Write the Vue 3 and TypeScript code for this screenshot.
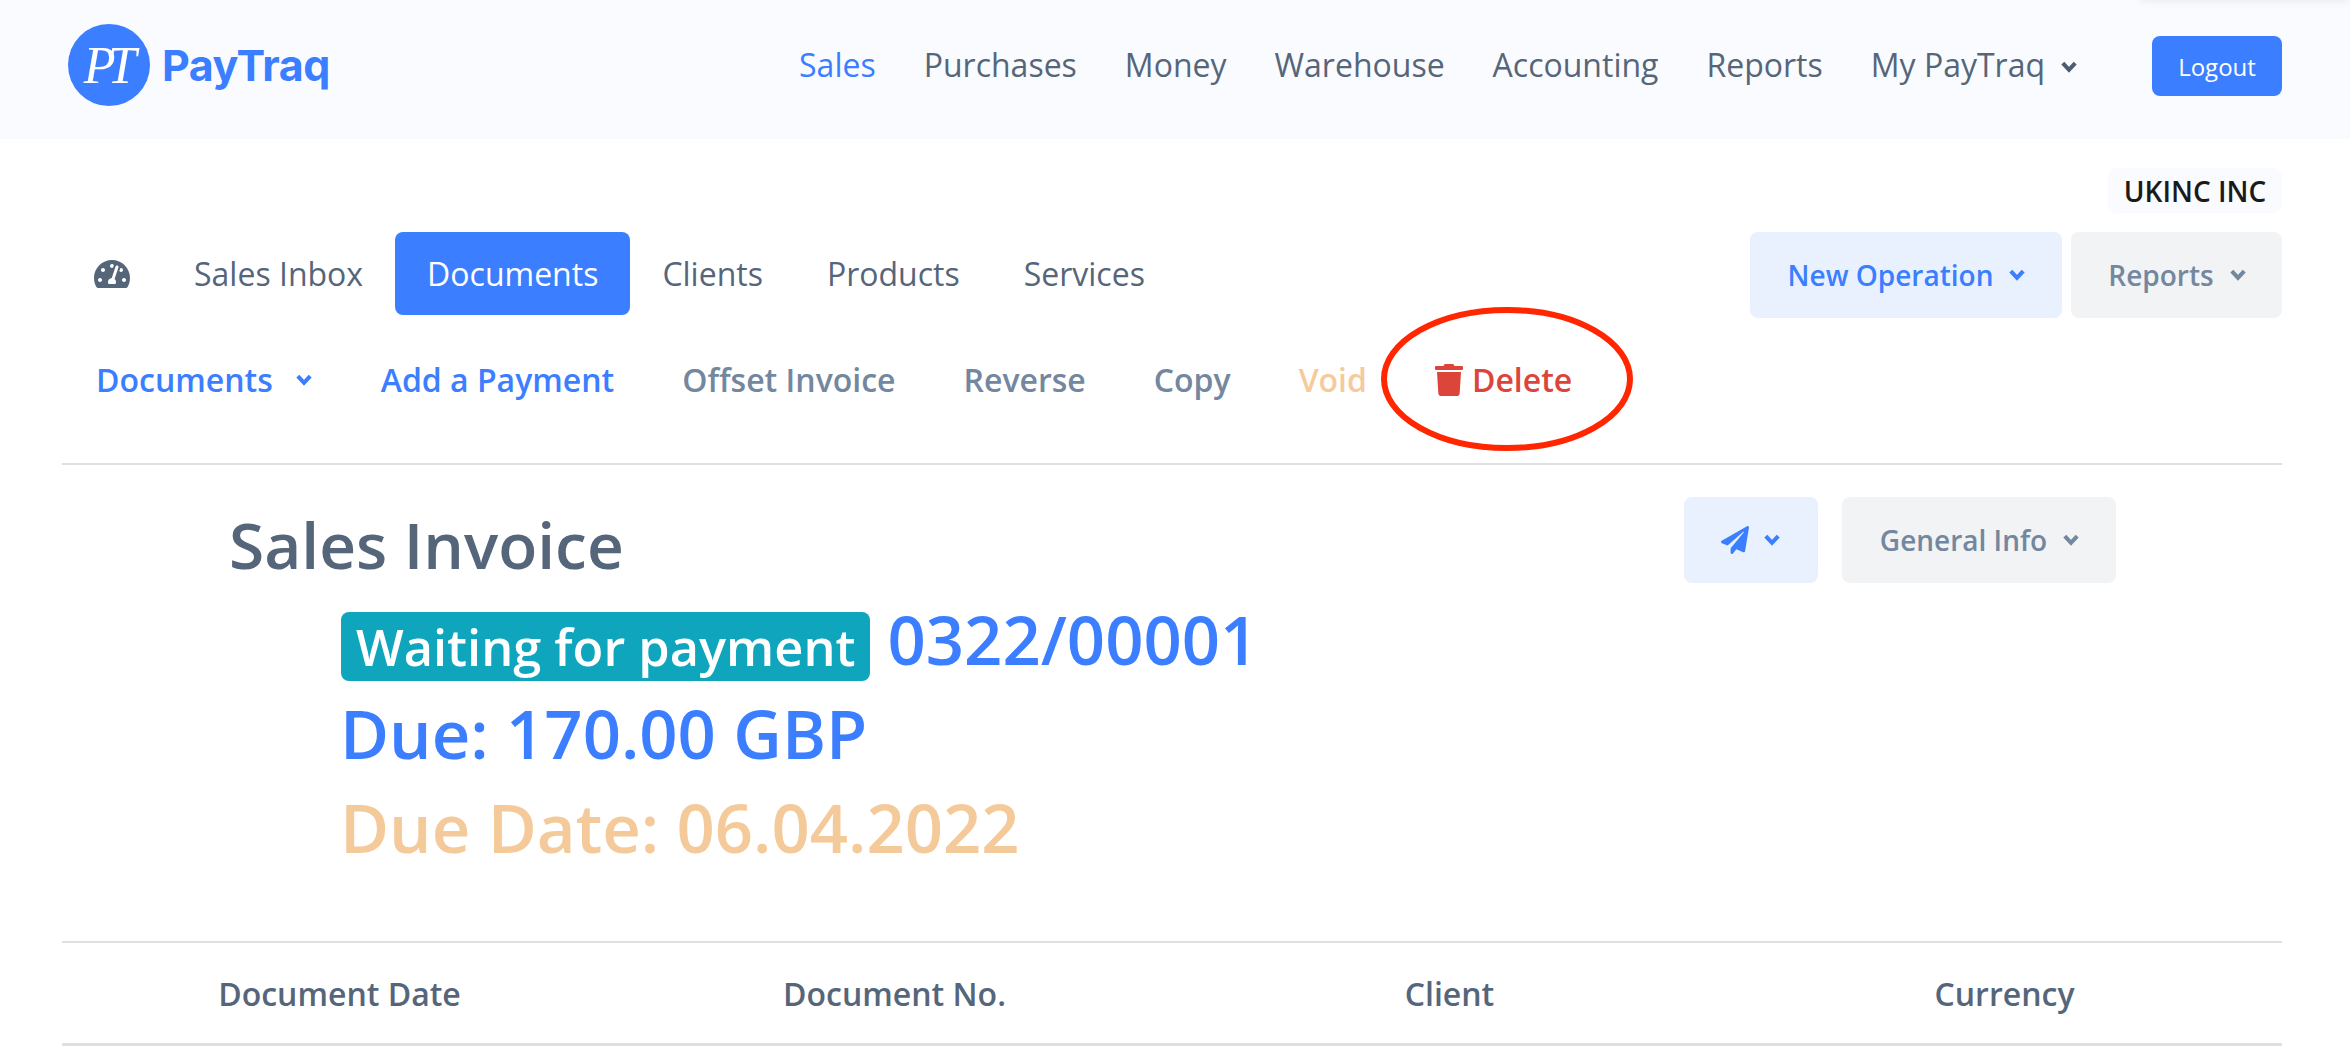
<script setup lang="ts">
const topNav: string[] = ['Sales', 'Purchases', 'Money', 'Warehouse', 'Accounting', 'Reports'];
const tabs: string[] = ['Sales Inbox', 'Documents', 'Clients', 'Products', 'Services'];
const columns: string[] = ['Document Date', 'Document No.', 'Client', 'Currency'];
</script>

<template>
  <div class="page">
    <header class="header">
      <div class="logo">
        <span class="logo-mark">PT</span>
        <span class="logo-word">PayTraq</span>
      </div>
      <nav class="top-nav">
        <a v-for="(n, i) in topNav" :key="n" :class="{ on: i === 0 }">{{ n }}</a>
        <a class="with-chev">My PayTraq
          <svg class="chev" viewBox="0 0 16 12"><polyline points="2.5,2.5 8,8.5 13.5,2.5" /></svg>
        </a>
      </nav>
      <button class="logout">Logout</button>
      <div class="corner-shadow"></div>
    </header>

    <main class="content">
      <div class="company-row"><span class="company">UKINC INC</span></div>

      <div class="tabs-row">
        <div class="tabs">
          <a class="tab gauge">
            <svg viewBox="0 0 576 512"><path d="M288 32C128.94 32 0 160.94 0 320c0 52.8 14.25 102.26 39.06 144.8 5.61 9.62 16.3 15.2 27.44 15.2h443c11.14 0 21.83-5.58 27.44-15.2C561.75 422.26 576 372.8 576 320c0-159.06-128.94-288-288-288zm0 64c14.71 0 26.58 10.13 30.32 23.65-1.11 2.26-2.64 4.23-3.45 6.67l-9.22 27.67c-5.13 3.49-10.97 6.01-17.64 6.01-17.67 0-32-14.33-32-32S270.33 96 288 96zM96 384c-17.67 0-32-14.33-32-32s14.33-32 32-32 32 14.33 32 32-14.33 32-32 32zm48-160c-17.67 0-32-14.33-32-32s14.33-32 32-32 32 14.33 32 32-14.33 32-32 32zm246.77-72.41l-61.33 184C343.13 347.33 352 364.54 352 384c0 11.72-3.38 22.55-8.88 32H232.88c-5.5-9.45-8.88-20.28-8.88-32 0-33.94 26.5-61.43 59.9-63.59l61.34-184.01c4.17-12.56 17.73-19.45 30.36-15.17 12.57 4.19 19.35 17.77 15.17 30.36zm14.66 57.2l15.52-46.55c3.47-1.29 7.13-2.23 11.05-2.23 17.67 0 32 14.33 32 32s-14.33 32-32 32c-11.38-.01-20.89-6.28-26.57-15.22zM480 384c-17.67 0-32-14.33-32-32s14.33-32 32-32 32 14.33 32 32-14.33 32-32 32z" /></svg>
          </a>
          <a v-for="t in tabs" :key="t" class="tab" :class="{ active: t === 'Documents' }">{{ t }}</a>
        </div>
        <div class="tab-actions">
          <button class="btn btn-blue new-op">New Operation
            <svg class="chev" viewBox="0 0 16 12"><polyline points="2.5,2.5 8,8.5 13.5,2.5" /></svg>
          </button>
          <button class="btn btn-gray reports">Reports
            <svg class="chev" viewBox="0 0 16 12"><polyline points="2.5,2.5 8,8.5 13.5,2.5" /></svg>
          </button>
        </div>
      </div>

      <div class="toolbar">
        <a class="tool blue">Documents
          <svg class="chev" viewBox="0 0 16 12"><polyline points="2.5,2.5 8,8.5 13.5,2.5" /></svg>
        </a>
        <a class="tool blue">Add a Payment</a>
        <a class="tool slate">Offset Invoice</a>
        <a class="tool slate">Reverse</a>
        <a class="tool slate">Copy</a>
        <a class="tool orange">Void</a>
        <a class="tool red delete">
          <svg class="trash" viewBox="0 0 448 512"><path d="M432 32H312l-9.4-18.7A24 24 0 0 0 281.1 0H166.8a23.72 23.72 0 0 0-21.4 13.3L136 32H16A16 16 0 0 0 0 48v32a16 16 0 0 0 16 16h416a16 16 0 0 0 16-16V48a16 16 0 0 0-16-16zM53.2 467a48 48 0 0 0 47.9 45h245.8a48 48 0 0 0 47.9-45L416 128H32z" /></svg>
          Delete
          <svg class="ring" viewBox="0 0 252 144"><ellipse cx="126" cy="72" rx="123" ry="69" /></svg>
        </a>
      </div>

      <section class="invoice">
        <div class="invoice-top">
          <h1 class="title">Sales Invoice</h1>
          <div class="invoice-actions">
            <button class="btn btn-blue send">
              <svg class="plane" viewBox="0 0 512 512"><path d="M476 3.2L12.5 270.6c-18.1 10.4-15.8 35.6 2.2 43.2L121 358.4l287.3-253.2c5.5-4.9 13.3 2.6 8.6 8.3L176 407v80.5c0 23.6 28.5 32.9 42.5 15.8L282 426l124.6 52.2c14.2 6 30.4-2.9 33-18.2l72-432C515 7.8 493.3-6.8 476 3.2z" /></svg>
              <svg class="chev" viewBox="0 0 16 12"><polyline points="2.5,2.5 8,8.5 13.5,2.5" /></svg>
            </button>
            <button class="btn btn-gray info">General Info
              <svg class="chev" viewBox="0 0 16 12"><polyline points="2.5,2.5 8,8.5 13.5,2.5" /></svg>
            </button>
          </div>
        </div>
        <div class="summary">
          <div class="status-line">
            <span class="badge">Waiting for payment</span>
            <span class="doc-no">0322/00001</span>
          </div>
          <div class="due">Due: 170.00 GBP</div>
          <div class="due-date">Due Date: 06.04.2022</div>
        </div>
      </section>

      <div class="table-head">
        <div v-for="c in columns" :key="c" class="col">{{ c }}</div>
      </div>
    </main>
  </div>
</template>

<style>
html, body { margin: 0; background: #fff; overflow: hidden; }
</style>

<style scoped>
.page {
  width: 2350px;
  height: 1062px;
  overflow: hidden;
  font-family: "Open Sans", "Liberation Sans", sans-serif;
  color: #56667a;
  background: #fff;
}
a { cursor: pointer; }
button { font-family: inherit; border: 0; cursor: pointer; }
.chev { width: 18px; height: 14px; flex: none; }
.chev polyline { fill: none; stroke: currentColor; stroke-width: 3.6; }

.header {
  position: relative;
  height: 139px;
  background: #f9fbff;
  display: flex;
  align-items: center;
  padding: 0 68px 9px;
  box-sizing: border-box;
}
.logo { display: flex; align-items: center; gap: 12px; }
.logo-mark {
  width: 82px;
  height: 82px;
  border-radius: 50%;
  background: #3b7eff;
  color: #fff;
  display: flex;
  align-items: center;
  justify-content: center;
  font: italic 400 52px "Liberation Serif", serif;
  letter-spacing: -8px;
  padding-right: 6px;
  box-sizing: border-box;
}
.logo-word {
  font: 700 43px "Inter", sans-serif;
  color: #3b7eff;
  letter-spacing: -0.5px;
}
.top-nav {
  margin-left: auto;
  display: flex;
  align-items: center;
  gap: 48px;
  font-size: 32px;
  line-height: 44px;
}
.top-nav .on { color: #3b7eff; }
.with-chev { display: flex; align-items: center; gap: 15px; }
.with-chev .chev { color: #4d5d70; margin-top: 4px; }
.logout {
  width: 130px;
  height: 60px;
  margin-left: 74px;
  margin-top: 2px;
  background: #3b7eff;
  color: #fff;
  font-size: 24px;
  font-weight: 400;
  border-radius: 8px;
}
.corner-shadow {
  position: absolute;
  right: 0;
  top: -8px;
  width: 210px;
  height: 6px;
  box-shadow: 0 2px 8px rgba(0, 0, 0, .1);
}

.content { padding: 0 68px 0 62px; width: 2220px; box-sizing: content-box; }
.company-row { display: flex; justify-content: flex-end; padding-top: 29px; }
.company {
  height: 45px;
  width: 174px;
  background: #f9fbff;
  border-radius: 8px;
  color: #1a1a1a;
  font-size: 28px;
  font-weight: 600;
  display: flex;
  align-items: center;
  justify-content: center;
}
.tabs-row {
  margin-top: 19px;
  display: flex;
  justify-content: space-between;
  align-items: flex-start;
}
.tabs { display: flex; }
.tab {
  height: 83px;
  padding: 0 32px;
  display: flex;
  align-items: center;
  font-size: 32px;
  border-radius: 8px;
}
.tab.active { background: #3b7eff; color: #fff; }
.gauge svg { width: 36px; height: 32px; fill: #56667a; }
.tab-actions { display: flex; gap: 9px; }
.btn {
  height: 86px;
  border-radius: 8px;
  font-weight: 600;
  display: flex;
  align-items: center;
  justify-content: center;
  padding: 0;
}
.btn-blue { background: #e9f1fe; color: #3b7eff; }
.btn-gray { background: #f1f3f5; color: #73879f; }
.new-op { width: 312px; font-size: 28px; gap: 15px; padding-left: 2px; }
.reports { width: 211px; font-size: 28px; gap: 15px; padding-left: 2px; }

.toolbar {
  height: 147px;
  box-sizing: border-box;
  border-bottom: 2px solid #dfdfdf;
  display: flex;
  align-items: flex-start;
  padding-top: 17px;
  font-size: 32px;
  font-weight: 600;
  line-height: 90px;
}
.tool { padding: 0 34px; display: flex; align-items: center; position: relative; height: 90px; }
.tool.blue { color: #3b7eff; }
.tool.slate { color: #73879f; }
.tool.orange { color: #f6cb9b; }
.tool.red { color: #dc4539; }
.tool .chev { margin-left: 22px; }
.delete { gap: 9px; }
.trash { width: 28px; height: 32px; fill: #dc4539; }
.ring {
  position: absolute;
  left: -20px;
  top: -28px;
  width: 252px;
  height: 144px;
  pointer-events: none;
}
.ring ellipse { fill: none; stroke: #ff2600; stroke-width: 6; }

.invoice { height: 478px; box-sizing: border-box; border-bottom: 2px solid #dfdfdf; padding: 32px 166px 0 167px; }
.invoice-top { display: flex; justify-content: space-between; align-items: flex-start; }
.title {
  margin: 8px 0 0;
  font-size: 64px;
  line-height: 80px;
  font-weight: 600;
  color: #56667a;
}
.invoice-actions { display: flex; gap: 24px; }
.send { width: 134px; gap: 14px; }
.send .plane { width: 28px; height: 28px; fill: #3b7eff; }
.info { width: 274px; font-size: 28px; gap: 15px; padding-left: 2px; }
.summary { padding-left: 112px; margin-top: 23px; }
.status-line { display: flex; align-items: center; gap: 17px; height: 72px; margin-bottom: 6px; }
.badge {
  background: #0fa5bd;
  color: #fff;
  font-size: 50.5px;
  font-weight: 600;
  height: 69px;
  padding: 0 15px;
  border-radius: 8px;
  display: flex;
  align-items: center;
  margin-top: 4px;
}
.doc-no { color: #3b7eff; font-size: 67px; font-weight: 600; line-height: 72px; margin-top: -10px; }
.due, .due-date { font-size: 67px; font-weight: 600; line-height: 94px; margin-left: -1px; }
.due { color: #3b7eff; }
.due-date { color: #f5ca9a; }

.table-head {
  height: 103px;
  box-sizing: border-box;
  display: grid;
  grid-template-columns: repeat(4, 1fr);
  align-items: center;
  border-bottom: 3px solid #dfdfdf;
  font-size: 32px;
  font-weight: 600;
  color: #56667a;
}
.col { text-align: center; }
</style>
